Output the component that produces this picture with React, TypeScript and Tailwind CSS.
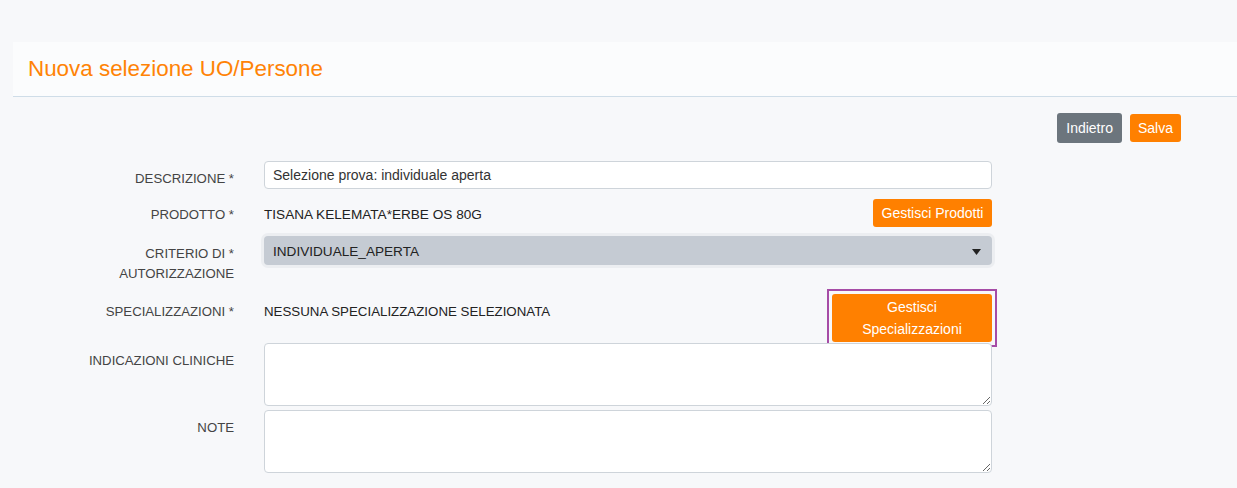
export default function App() {
  const label = "w-[234px] shrink-0 text-right text-[13.2px] leading-[20px] text-[#444]";
  return (
    <div className="min-h-screen bg-[#f7f8fa] pt-[42px] font-['Liberation_Sans',Arial,sans-serif]">
      {/* Header */}
      <div className="ml-[13px] h-[55px] bg-[#fbfcfd] border-b border-[#cfdde8] flex items-center pl-[15px]">
        <h1 className="text-[22.4px] text-[#ff8306] leading-none">Nuova selezione UO/Persone</h1>
      </div>

      {/* Actions */}
      <div className="mt-[16px] flex items-center justify-end gap-2 pr-[56px]">
        <button className="h-[30px] px-[9px] rounded-[3px] bg-[#6c757d] text-white text-[14px]">Indietro</button>
        <button className="h-[28px] px-[8px] rounded-[3px] bg-[#ff8000] text-white text-[14px]">Salva</button>
      </div>

      {/* Form */}
      <div className="mt-[18px]">
        <div className="flex items-start">
          <div className={label + " pt-[8px]"}>DESCRIZIONE *</div>
          <input
            className="ml-[30px] w-[728px] h-[28px] px-[8px] bg-white border border-[#ced4da] rounded-[4px] text-[14px] text-[#333] outline-none"
            defaultValue="Selezione prova: individuale aperta"
          />
        </div>

        <div className="mt-[10px] flex items-start">
          <div className={label + " pt-[6px]"}>PRODOTTO *</div>
          <div className="ml-[30px] w-[728px] flex items-start justify-between">
            <span className="pt-[6px] text-[13.6px] leading-[20px] text-[#222]">TISANA KELEMATA*ERBE OS 80G</span>
            <button className="h-[28px] w-[119px] rounded-[3px] bg-[#ff8000] text-white text-[14px]">Gestisci Prodotti</button>
          </div>
        </div>

        <div className="mt-[9px] flex items-start">
          <div className={label + " pt-[8px]"}>
            CRITERIO DI *
            <br />
            AUTORIZZAZIONE
          </div>
          <div className="ml-[30px] w-[728px] h-[29px] rounded-[4px] bg-[#c5cbd3] ring-[3px] ring-[#eceef1] flex items-start justify-between pl-[9px] pr-[11px]">
            <span className="pt-[6px] text-[13.6px] leading-[20px] text-[#222]">INDIVIDUALE_APERTA</span>
            <svg className="self-center mt-[2px]" width="9" height="6" viewBox="0 0 9 6">
              <path d="M0 0h9L4.5 6z" fill="#222" />
            </svg>
          </div>
        </div>

        <div className="mt-[10px] flex items-start">
          <div className={label + " pt-[8px]"}>SPECIALIZZAZIONI *</div>
          <div className="ml-[30px] w-[728px] flex items-start justify-between">
            <span className="pt-[8px] text-[13.3px] leading-[20px] text-[#222]">NESSUNA SPECIALIZZAZIONE SELEZIONATA</span>
            <div className="-m-[5px] border-2 border-[#a64ca6] p-[3px]">
              <button className="block h-[48px] w-[160px] rounded-[3px] bg-[#ff8000] text-white text-[14px] leading-[22px]">
                Gestisci
                <br />
                Specializzazioni
              </button>
            </div>
          </div>
        </div>

        <div className="mt-[1px] flex items-start">
          <div className={label + " pt-[8px]"}>INDICAZIONI CLINICHE</div>
          <textarea className="ml-[30px] w-[728px] h-[63px] bg-white border border-[#ced4da] rounded-[4px] outline-none" />
        </div>

        <div className="mt-[4px] flex items-start">
          <div className={label + " pt-[8px]"}>NOTE</div>
          <textarea className="ml-[30px] w-[728px] h-[63px] bg-white border border-[#ced4da] rounded-[4px] outline-none" />
        </div>
      </div>
    </div>
  );
}
